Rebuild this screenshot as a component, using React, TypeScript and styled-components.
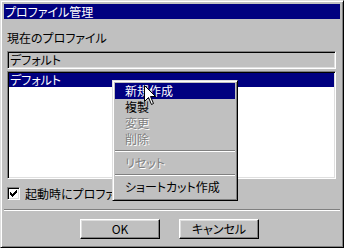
import React from "react";
import styled, { createGlobalStyle, css } from "styled-components";

const GlobalStyle = createGlobalStyle`
  html, body {
    margin: 0;
    padding: 0;
    background: #c0c0c0;
  }

  body {
    font-family: "Noto Sans CJK JP", "Noto Sans", sans-serif;
    font-size: 12px;
    font-feature-settings: "palt";
  }
`;

const raised = css`
  border: 1px solid;
  border-color: #fff #000 #000 #fff;
  box-shadow: inset -1px -1px #808080, inset 1px 1px #dfdfdf;
`;

const sunken = css`
  border: 1px solid;
  border-color: #808080 #fff #fff #808080;
  box-shadow: inset 1px 1px #000, inset -1px -1px #dfdfdf;
`;

const Window = styled.div`
  position: relative;
  box-sizing: border-box;
  width: 344px;
  height: 248px;
  padding: 2px;
  display: flex;
  flex-direction: column;

  background: #c0c0c0;
  border: 1px solid;
  border-color: #dfdfdf #000 #000 #dfdfdf;
  box-shadow: inset 1px 1px #fff, inset -1px -1px #808080;
`;

const TitleBar = styled.div`
  height: 15px;
  margin: 1px 1px 0 1px;
  padding-left: 1px;
  display: flex;
  align-items: center;

  background: #000080;
  color: #fff;
  line-height: 15px;
`;

const Body = styled.div`
  flex: 1;
  display: flex;
  flex-direction: column;
  padding: 0 5px 0 4px;
`;

const Label = styled.div`
  margin-top: 12px;
  height: 14px;
  line-height: 14px;
  color: #000;
`;

const TextBox = styled.div`
  ${sunken}
  box-sizing: border-box;
  margin-top: 6px;
  height: 18px;
  padding: 0 2px;
  line-height: 16px;
  background: #c0c0c0;
  color: #000;
`;

const ListBox = styled.div`
  ${sunken}
  box-sizing: border-box;
  margin-top: 2px;
  height: 108px;
  padding: 1px;
  background: #fff;
`;

const ListRow = styled.div<{ $selected?: boolean }>`
  height: 14px;
  padding-left: 1px;
  line-height: 14px;
  color: ${({ $selected }) => ($selected ? "#fff" : "#000")};
  background: ${({ $selected }) => ($selected ? "#000080" : "transparent")};
`;

const CheckRow = styled.label`
  margin-top: 8px;
  height: 13px;
  display: flex;
  align-items: center;
  gap: 5px;
  color: #000;
  line-height: 13px;
  white-space: nowrap;
  overflow: hidden;
`;

const CheckBox = styled.span`
  ${sunken}
  box-sizing: border-box;
  width: 13px;
  height: 13px;
  flex: none;
  display: flex;
  align-items: center;
  justify-content: center;
  background: #fff;
`;

const Separator = styled.div`
  margin: 9px -4px 0 -3px;
  height: 0;
  border-top: 1px solid #808080;
  border-bottom: 1px solid #fff;
`;

const ButtonRow = styled.div`
  margin-top: 8px;
  padding-left: 73px;
  display: flex;
  gap: 19px;
`;

const Button = styled.button`
  ${raised}
  box-sizing: border-box;
  width: 80px;
  height: 20px;
  padding: 0;
  background: #c0c0c0;
  color: #000;
  font: inherit;
  line-height: 18px;
`;

const Menu = styled.div`
  position: absolute;
  left: 111px;
  top: 79px;
  box-sizing: border-box;
  width: 126px;
  padding: 2px 2px 5px 2px;
  display: flex;
  flex-direction: column;

  background: #c0c0c0;
  border: 1px solid;
  border-color: #dfdfdf #000 #000 #dfdfdf;
  box-shadow: inset 1px 1px #fff, inset -1px -1px #808080;
`;

const MenuItem = styled.div<{ $active?: boolean; $disabled?: boolean }>`
  height: 16px;
  padding-left: 10px;
  line-height: 16px;
  white-space: nowrap;
  color: #000;

  ${({ $active }) =>
    $active &&
    css`
      background: #000080;
      color: #fff;
    `}

  ${({ $disabled }) =>
    $disabled &&
    css`
      color: #808080;
      text-shadow: 1px 1px 0 #fff;
    `}
`;

const MenuSeparator = styled.div`
  margin: 3px 0;
  height: 0;
  border-top: 1px solid #808080;
  border-bottom: 1px solid #fff;
`;

const Cursor = styled.svg`
  position: absolute;
  left: 143px;
  top: 84px;
`;

function CheckMark(): JSX.Element {
  return (
    <svg width="7" height="7" viewBox="0 0 7 7">
      <path
        d="M0 2h1v1h1v1h1V3h1V2h1V1h1V0h1v3h-1v1h-1v1h-1v1h-1v1H2V6H1V5H0z"
        fill="#000"
      />
    </svg>
  );
}

export default function App(): JSX.Element {
  return (
    <>
      <GlobalStyle />
      <Window>
        <TitleBar>プロファイル管理</TitleBar>
        <Body>
          <Label>現在のプロファイル</Label>
          <TextBox>デフォルト</TextBox>
          <ListBox>
            <ListRow $selected>デフォルト</ListRow>
          </ListBox>
          <CheckRow>
            <CheckBox>
              <CheckMark />
            </CheckBox>
            起動時にプロファイルを選択
          </CheckRow>
          <Separator />
          <ButtonRow>
            <Button>OK</Button>
            <Button>キャンセル</Button>
          </ButtonRow>
        </Body>

        <Menu>
          <MenuItem $active>新規作成</MenuItem>
          <MenuItem>複製</MenuItem>
          <MenuItem $disabled>変更</MenuItem>
          <MenuItem $disabled>削除</MenuItem>
          <MenuSeparator />
          <MenuItem $disabled>リセット</MenuItem>
          <MenuSeparator />
          <MenuItem>ショートカット作成</MenuItem>
        </Menu>

        <Cursor width="13" height="21" viewBox="0 0 13 21">
          <path
            d="M0.5 0.5V16.5L4.5 12.5L7.5 19.5L9.5 18.5L6.5 11.5H11.5Z"
            fill="#fff"
            stroke="#000"
            strokeWidth="1"
          />
        </Cursor>
      </Window>
    </>
  );
}
